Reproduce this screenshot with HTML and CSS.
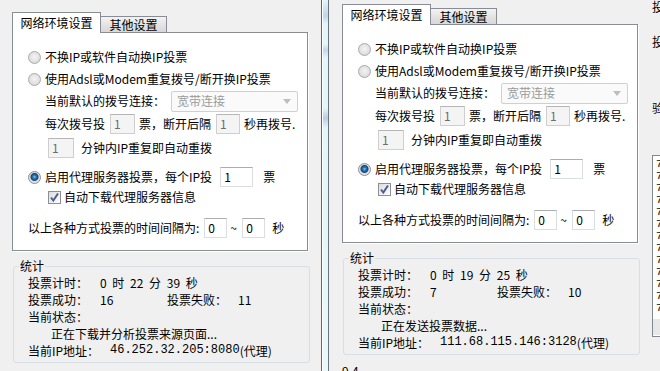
FILE: index.html
```html
<!DOCTYPE html>
<html lang="zh-CN">
<head>
    <meta charset="UTF-8">
    <title>投票设置</title>
    <link rel="stylesheet" href="styles.css">
</head>
<body>
    <div class="win win-left">
        <div class="dialog">
            <div class="tabs">
                <div class="tab active">网络环境设置</div>
                <div class="tab">其他设置</div>
            </div>
            <div class="panel">
                <div class="opt"><span class="radio"></span>不换IP或软件自动换IP投票</div>
                <div class="opt"><span class="radio"></span>使用Adsl或Modem重复拨号/断开换IP投票</div>
                <div class="sub dial">
                    <span class="dial-label">当前默认的拨号连接：</span>
                    <div class="select">宽带连接<svg width="8" height="5" viewBox="0 0 8 5"><path d="M0 0h8L4 5z" fill="#bdbdbd"/></svg></div>
                </div>
                <div class="sub row-gap2">每次拨号投<span class="box off b1">1</span>票，断开后隔<span class="box off b2">1</span>秒再拨号.</div>
                <div class="sub2 row-gap4"><span class="box off b3">1</span><span class="after">分钟内IP重复即自动重拨</span></div>
                <div class="opt opt-proxy"><span class="radio on"></span>启用代理服务器投票，每个IP投<span class="box b4">1</span><span class="after2">票</span></div>
                <div class="sub2 chk-row"><span class="check"><svg width="11" height="11" viewBox="0 0 11 11"><path d="M2 5.5 4.3 8.5 9 1.5" fill="none" stroke="#4b5f94" stroke-width="2"/></svg></span>自动下载代理服务器信息</div>
                <div class="interval">以上各种方式投票的时间间隔为:<span class="box b5">0</span><span class="tilde">~</span><span class="box b5">0</span><span class="after3">秒</span></div>
            </div>
            <div class="group">
                <span class="group-title">统计</span>
                <div class="stat"><span class="k">投票计时：</span><span class="timer">0 时 22 分 39 秒</span></div>
                <div class="stat"><span class="k">投票成功：</span><span class="v">16</span><span class="k2">投票失败：</span>11</div>
                <div class="stat">当前状态：</div>
                <div class="stat status">正在下载并分析投票来源页面...</div>
                <div class="stat"><span class="k ip-k">当前IP地址：</span><span class="mono">46.252.32.205:8080</span>(代理)</div>
            </div>
        </div>
    </div>

    <div class="frame"></div>

    <div class="win win-right">
        <div class="dialog">
            <div class="tabs">
                <div class="tab active">网络环境设置</div>
                <div class="tab">其他设置</div>
            </div>
            <div class="panel">
                <div class="opt"><span class="radio"></span>不换IP或软件自动换IP投票</div>
                <div class="opt"><span class="radio"></span>使用Adsl或Modem重复拨号/断开换IP投票</div>
                <div class="sub dial">
                    <span class="dial-label">当前默认的拨号连接：</span>
                    <div class="select">宽带连接<svg width="8" height="5" viewBox="0 0 8 5"><path d="M0 0h8L4 5z" fill="#bdbdbd"/></svg></div>
                </div>
                <div class="sub row-gap2">每次拨号投<span class="box off b1">1</span>票，断开后隔<span class="box off b2">1</span>秒再拨号.</div>
                <div class="sub2 row-gap4"><span class="box off b3">1</span><span class="after">分钟内IP重复即自动重拨</span></div>
                <div class="opt opt-proxy"><span class="radio on"></span>启用代理服务器投票，每个IP投<span class="box b4">1</span><span class="after2">票</span></div>
                <div class="sub2 chk-row"><span class="check"><svg width="11" height="11" viewBox="0 0 11 11"><path d="M2 5.5 4.3 8.5 9 1.5" fill="none" stroke="#4b5f94" stroke-width="2"/></svg></span>自动下载代理服务器信息</div>
                <div class="interval">以上各种方式投票的时间间隔为:<span class="box b5">0</span><span class="tilde">~</span><span class="box b5">0</span><span class="after3">秒</span></div>
            </div>
            <div class="group">
                <span class="group-title">统计</span>
                <div class="stat"><span class="k">投票计时：</span><span class="timer">0 时 19 分 25 秒</span></div>
                <div class="stat"><span class="k">投票成功：</span><span class="v">7</span><span class="k2">投票失败：</span>10</div>
                <div class="stat">当前状态：</div>
                <div class="stat status">正在发送投票数据...</div>
                <div class="stat"><span class="k ip-k">当前IP地址：</span><span class="mono">111.68.115.146:3128</span>(代理)</div>
            </div>
            <div class="version">9.4</div>
        </div>

        <div class="side">
            <div class="side-label">投票</div>
            <div class="side-label l2">投票</div>
            <div class="side-label l3">验证</div>
            <div class="list">
                <div class="list-items">
                    <div>7</div><div>7</div><div>7</div><div>7</div><div>7</div>
                    <div>7</div><div>7</div><div>7</div><div>7</div><div>7</div>
                    <div>7</div><div>7</div><div>7</div>
                </div>
                <div class="hscroll"></div>
            </div>
        </div>
    </div>
</body>
</html>
```

FILE: styles.css
```css
* {
    box-sizing: border-box;
    margin: 0;
    padding: 0;
}

body {
    width: 660px;
    height: 371px;
    overflow: hidden;
    display: flex;
    background-color: #F0F0F0;
    color: #000000;
    font-family: "Noto Sans CJK SC", "Liberation Sans", sans-serif;
    font-size: 12px;
    line-height: 16px;
}

.win {
    flex: none;
    display: flex;
    align-items: flex-start;
}

.win-left {
    width: 321px;
    padding: 12px 0 0 12px;
}

.win-right {
    width: 331px;
    padding-left: 13px;
}

.win-right .dialog {
    margin-top: 4px;
}

/* window border between the two screenshots */
.frame {
    flex: none;
    width: 8px;
    height: 371px;
    border-left: 1px solid #5E686D;
    border-right: 1px solid #6A767B;
    box-shadow: inset 1px 0 0 #FFFFFF;
    background: linear-gradient(#E4F6FB 0, #BFD6EC 16px, #E4F6FB 24px, #E4F6FB 44px, #C3D7EC 50px, #E4F6FB 58px, #E4F6FB 108px, #B9CDE6 118px, #E4F6FB 128px, #E8F8FC 100%);
}

.dialog {
    width: 298px;
    flex: none;
}

/* tabs */
.tabs {
    display: flex;
    align-items: flex-end;
    height: 20px;
}

.tab {
    height: 16px;
    width: 66px;
    border: 1px solid #898C95;
    border-left: none;
    border-bottom: none;
    background: linear-gradient(#F3F3F3, #E1E1E1 60%, #D8D8D8);
    text-align: center;
    line-height: 15px;
}

.tab.active {
    position: relative;
    z-index: 1;
    height: 21px;
    width: 89px;
    margin-bottom: -1px;
    border-left: 1px solid #898C95;
    background: #FFFFFF;
    line-height: 19px;
}

.panel {
    width: 296px;
    height: 219px;
    border: 1px solid #898C95;
    background-color: #FFFFFF;
    box-shadow: 1px 1px 0 #FFFFFF;
    padding-top: 13px;
}

.opt {
    display: flex;
    align-items: center;
    height: 22px;
    padding-left: 15px;
}

.radio {
    flex: none;
    width: 13px;
    height: 13px;
    margin-right: 4px;
    border-radius: 50%;
    border: 1px solid #A9A9A9;
    background: radial-gradient(circle at 50% 45%, #F4F4F4 0, #E2E2E2 55%, #CFCFCF 100%);
}

.radio.on {
    border-color: #8A8F96;
    background: radial-gradient(circle at 50% 45%, #8FD0F5 0, #2C7BC2 1.5px, #17456F 3.5px, #DADDE0 4.5px, #F2F2F2 100%);
}

.sub {
    display: flex;
    align-items: center;
    padding-left: 32px;
}

.sub2 {
    display: flex;
    align-items: center;
    padding-left: 35px;
}

.dial {
    height: 22px;
}

.dial-label {
    width: 126px;
}

.select {
    width: 127px;
    height: 21px;
    display: flex;
    align-items: center;
    justify-content: space-between;
    padding: 0 6px 0 5px;
    border: 1px solid #D0D0D0;
    border-radius: 2px;
    background-color: #FAFAFA;
    color: #9A9A9A;
}

.row-gap2 {
    margin-top: 2px;
    height: 20px;
}

.row-gap4 {
    margin-top: 4px;
    height: 20px;
}

.box {
    flex: none;
    height: 20px;
    padding-left: 3px;
    border: 1px solid #DADDE2;
    border-top-color: #ABADB3;
    background-color: #FFFFFF;
    line-height: 17px;
}

.box.off {
    border-color: #CFCFCF;
    border-top-color: #B6B6B6;
    background-color: #F4F4F4;
    color: #6D6D6D;
}

.b1 {
    width: 25px;
    margin: 0 4px 0 5px;
}

.b2 {
    width: 24px;
    margin: 0 4px 0 5px;
}

.b3 {
    width: 26px;
}

.after {
    margin-left: 7px;
}

.opt-proxy {
    margin-top: 9px;
    height: 20px;
}

.b4 {
    width: 33px;
    margin-left: 8px;
}

.after2 {
    margin-left: 10px;
}

.chk-row {
    margin-top: 1px;
    height: 18px;
}

.check {
    flex: none;
    width: 13px;
    height: 13px;
    margin-right: 3px;
    display: flex;
    align-items: center;
    justify-content: center;
    border: 1px solid #8E8F8F;
    background: linear-gradient(135deg, #DCDCDC, #FFFFFF);
}

.interval {
    display: flex;
    align-items: center;
    margin-top: 12px;
    height: 20px;
    padding-left: 15px;
}

.b5 {
    width: 23px;
    margin-left: 5px;
}

.interval .tilde {
    margin: 0 -1px 0 3px;
    width: 8px;
}

.after3 {
    margin-left: 7px;
}

/* statistics group */
.group {
    position: relative;
    width: 297px;
    height: 97px;
    margin: 15px 0 0 1px;
    padding: 7px 0 0 14px;
    border: 1px solid #D5DFE5;
    border-radius: 3px;
}

.group-title {
    position: absolute;
    top: -9px;
    left: 5px;
    padding: 0 1px;
    background-color: #F0F0F0;
}

.stat {
    display: flex;
    height: 17px;
    line-height: 17px;
    white-space: pre;
}

.stat .k {
    width: 72px;
}

.stat .ip-k {
    width: 82px;
}

.stat .v {
    width: 67px;
}

.stat .k2 {
    width: 71px;
}

.timer {
    word-spacing: 3px;
}

.status {
    padding-left: 23px;
}

.mono {
    font-family: "Liberation Mono", monospace;
}

.version {
    margin-top: 9px;
    line-height: 14px;
}

/* right column of the second window, cut by the screenshot */
.side {
    flex: none;
    width: 40px;
    margin-left: 12px;
}

.side-label {
    line-height: 14px;
    white-space: nowrap;
}

.side-label.l2 {
    margin-top: 21px;
}

.side-label.l3 {
    margin-top: 52px;
}

.list {
    margin-top: 40px;
    height: 182px;
    display: flex;
    flex-direction: column;
    border: 1px solid #828790;
    background-color: #FFFFFF;
}

.list-items {
    flex: 1;
    overflow: hidden;
    padding: 2px 0 0 3px;
    font-family: "Liberation Mono", monospace;
    font-size: 11px;
    line-height: 12px;
}

.hscroll {
    height: 16px;
    margin-bottom: 1px;
    background-color: #E8E8E8;
}
```
